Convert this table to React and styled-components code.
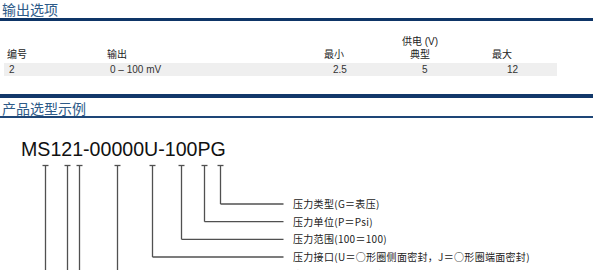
import React from 'react';
import styled, { createGlobalStyle } from 'styled-components';

const GlobalStyle = createGlobalStyle`
  html, body {
    margin: 0;
    padding: 0;
    background: #fff;
  }
`;

const Page = styled.div`
  width: 600px;
  height: 270px;
  overflow: hidden;
  background: #fff;
  font-family: "Liberation Sans", "Noto Sans CJK SC", sans-serif;
  color: #333;
`;

const Title = styled.div`
  margin-top: ${(props) => props.top || 0}px;
  padding-left: 2px;
  font-family: "Noto Sans CJK SC", sans-serif;
  font-size: 14px;
  line-height: 16px;
  color: #2d5a88;
`;

const Rule = styled.div`
  width: 593px;
  height: ${(props) => props.size}px;
  margin-top: ${(props) => props.top || 0}px;
  background: ${(props) => props.color || '#0e3567'};
`;

const Table = styled.div`
  margin-top: 14px;
  margin-left: 4px;
  width: 553px;
`;

const Row = styled.div`
  display: grid;
  grid-template-columns: 100px 217px 86px 82px 68px;
  height: 13px;
  margin-top: ${(props) => props.top || 0}px;
  background: ${(props) => (props.shaded ? '#efefef' : 'transparent')};
  font-size: 10px;
  line-height: 13px;
  color: ${(props) => (props.head ? '#222' : '#333')};
`;

const Cell = styled.div`
  padding-left: ${(props) => props.pad || 3}px;
  white-space: nowrap;
  grid-column: ${(props) => props.span || 'auto'};
`;

const Code = styled.div`
  margin-top: 21px;
  padding-left: 21px;
  font-family: "Liberation Sans", Arial, sans-serif;
  font-size: 19.6px;
  line-height: 20px;
  color: #111;
`;

const Diagram = styled.div`
  display: flex;
  align-items: flex-start;
`;

const Labels = styled.ul`
  list-style: none;
  margin: 0 0 0 3px;
  padding: 36px 0 0 0;
  font-family: "Noto Sans CJK SC", sans-serif;
  font-size: 10px;
  line-height: 17.7px;
  letter-spacing: 0.3px;
  color: #222;
  white-space: nowrap;
`;

const ticks = [45.5, 67.5, 79.5, 117.5, 152.5, 181.5, 204.5, 220.5];
const elbows = [
  { x: 220.5, y: 45 },
  { x: 204.5, y: 62.7 },
  { x: 181.5, y: 80.3 },
  { x: 152.5, y: 98 },
  { x: 117.5, y: 115.7 },
];

function Leaders() {
  return (
    <svg width="290" height="120" viewBox="0 0 290 120">
      <g stroke="#505050" strokeWidth="1.3" fill="none">
        {ticks.map((x) => {
          const elbow = elbows.find((e) => e.x === x);
          return (
            <g key={x}>
              <line x1={x - 3} y1="6.5" x2={x + 3} y2="6.5" />
              <line x1={x} y1="6.5" x2={x} y2={elbow ? elbow.y : 120} />
            </g>
          );
        })}
        {elbows.map((e) => (
          <line key={e.y} x1={e.x} y1={e.y} x2="283.5" y2={e.y} />
        ))}
      </g>
    </svg>
  );
}

const labels = [
  '压力类型(G＝表压)',
  '压力单位(P＝Psi)',
  '压力范围(100＝100)',
  '压力接口(U＝○形圈侧面密封，J＝○形圈端面密封)',
  '密封规格(V＝真空密封)',
];

export default function App() {
  return (
    <>
      <GlobalStyle />
      <Page>
        <Title top={1}>输出选项</Title>
        <Rule size={3} top={1} />

        <Table>
          <Row head>
            <Cell span="3 / span 3" pad={81}>供电 (V)</Cell>
          </Row>
          <Row head>
            <Cell>编号</Cell>
            <Cell>输出</Cell>
            <Cell>最小</Cell>
            <Cell>典型</Cell>
            <Cell>最大</Cell>
          </Row>
          <Row shaded top={2}>
            <Cell pad={5}>2</Cell>
            <Cell pad={6}>0 – 100 mV</Cell>
            <Cell pad={12}>2.5</Cell>
            <Cell pad={15}>5</Cell>
            <Cell pad={18}>12</Cell>
          </Row>
        </Table>

        <Rule size={4} top={18} color="#12386a" />
        <Title top={2}>产品选型示例</Title>
        <Rule size={2} color="#1e4677" />

        <Code>MS121-00000U-100PG</Code>
        <Diagram>
          <Leaders />
          <Labels>
            {labels.map((l) => (
              <li key={l}>{l}</li>
            ))}
          </Labels>
        </Diagram>
      </Page>
    </>
  );
}
